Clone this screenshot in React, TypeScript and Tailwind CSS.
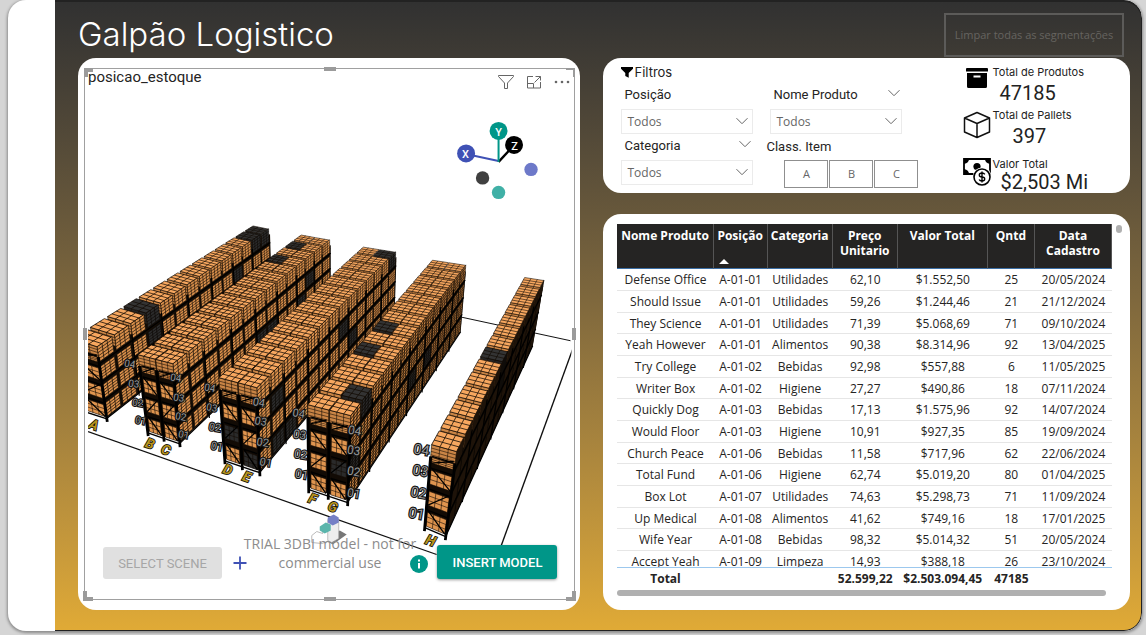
import React from "react";

type Pt = [number, number];

const lerp = (a: Pt, b: Pt, t: number): Pt => [a[0] + (b[0] - a[0]) * t, a[1] + (b[1] - a[1]) * t];
const fmt = (p: Pt) => `${p[0].toFixed(1)} ${p[1].toFixed(1)}`;
const poly = (pts: Pt[]) => `M${pts.map(fmt).join("L")}Z`;
const seg = (a: Pt, b: Pt) => `M${fmt(a)}L${fmt(b)}`;

// Grid lines across the quad a-b-c-d, with n columns along a-b and m rows along a-d.
function mesh(a: Pt, b: Pt, c: Pt, d: Pt, n: number, m: number) {
  let out = "";
  for (let i = 0; i <= n; i++) out += seg(lerp(a, b, i / n), lerp(d, c, i / n));
  for (let j = 0; j <= m; j++) out += seg(lerp(a, d, j / m), lerp(b, c, j / m));
  return out;
}

// Corners: top-left, top-right, bottom-right, bottom-left.
interface RackData {
  near: Pt[];
  far: Pt[];
  bays: number;
  darkTop: string[];
  darkSide: string[];
  darkFront: string[];
  side: string;
  sideLine: number;
}

const racks: RackData[] = [
  {
    near: [[72, 339], [97, 347], [107, 420], [86, 413]],
    far: [[255, 225], [270, 228], [272, 290], [257, 286]],
    bays: 1,
    darkTop: ["3-0", "13-0", "12-0"],
    darkSide: ["3-3", "3-2", "12-3", "13-3", "10-2"],
    darkFront: [],
    side: "#d98f4b",
    sideLine: 0.8,
  },
  {
    near: [[138, 355], [173, 364], [180, 445], [148, 434]],
    far: [[303, 234], [331, 239], [331, 300], [304, 295]],
    bays: 2,
    darkTop: ["12-0", "10-0"],
    darkSide: ["11-2", "10-1", "7-1", "6-1"],
    darkFront: [],
    side: "#d98f4b",
    sideLine: 0.8,
  },
  {
    near: [[219, 378], [257, 388], [260, 474], [225, 462]],
    far: [[365, 246], [397, 251], [395, 314], [365, 309]],
    bays: 2,
    darkTop: ["13-1"],
    darkSide: ["1-2", "1-0", "13-3", "7-2", "8-1", "2-0"],
    darkFront: ["0-1", "1-0"],
    side: "#d98f4b",
    sideLine: 0.8,
  },
  {
    near: [[308, 405], [351, 416], [348, 504], [309, 491]],
    far: [[434, 259], [467, 264], [461, 333], [430, 328]],
    bays: 2,
    darkTop: ["1-1", "4-0", "6-0"],
    darkSide: ["1-3", "6-1", "8-1", "0-1"],
    darkFront: ["1-1"],
    side: "#d08743",
    sideLine: 0.9,
  },
  {
    near: [[432, 445], [457, 452], [446, 538], [425, 529]],
    far: [[526, 276], [545, 279], [533, 347], [515, 343]],
    bays: 1,
    darkTop: ["6-0"],
    darkSide: ["6-3", "6-2"],
    darkFront: [],
    side: "#8f5a2a",
    sideLine: 1.4,
  },
];

const GROUPS = 14;
const LEVELS = 4;

function Rack({ rack }: { rack: RackData }) {
  const { near, far, bays } = rack;
  const depth = (t: number) => (1.45 * t) / (1 + 0.45 * t);
  const at = (u: number, t: number, v: number): Pt => {
    const s = depth(t);
    const n = lerp(lerp(near[3], near[2], u), lerp(near[0], near[1], u), v);
    const f = lerp(lerp(far[3], far[2], u), lerp(far[0], far[1], u), v);
    return lerp(n, f, s);
  };
  const shapes: React.ReactNode[] = [];
  shapes.push(
    <path key="wall" d={poly([at(1, 0, 0.02), at(1, 1, 0.02), at(1, 1, 0.9), at(1, 0, 0.86)])} fill="#140d06" />,
    <path key="deck" d={poly([at(0.05, 0, 0.84), at(1, 0, 0.84), at(1, 1, 0.84), at(0.05, 1, 0.84)])} fill="#140d06" />,
  );
  for (let i = GROUPS - 1; i >= 0; i--) {
    const t0 = i / GROUPS;
    const t1 = (i + 0.8) / GROUPS;
    for (let l = 0; l < LEVELS; l++) {
      const v0 = (l + 0.16) / LEVELS;
      const v1 = l === 3 ? 1 : (l + 0.9) / LEVELS;
      const q: Pt[] = [at(1, t0, v0), at(1, t1 + 0.004, v0), at(1, t1 + 0.004, v1), at(1, t0, v1)];
      const dark = rack.darkSide.includes(`${i}-${l}`);
      shapes.push(
        <path key={`s${i}-${l}`} d={poly(q)} fill={dark ? "#2b2b2b" : rack.side} />,
        <path
          key={`sm${i}-${l}`}
          d={mesh(q[0], q[1], q[2], q[3], 3, 5)}
          stroke="#0b0703"
          strokeWidth={rack.sideLine * (1 - 0.3 * t0)}
          opacity="0.85"
        />,
      );
    }
    for (let b = 0; b < bays; b++) {
      const u0 = b / bays + (b ? 0.01 : 0);
      const u1 = (b + 1) / bays - (b + 1 < bays ? 0.01 : 0);
      const dark = rack.darkTop.includes(`${i}-${b}`);
      const front: Pt[] = [at(u0, t0, 0.84), at(u1, t0, 0.84), at(u1, t0, 1), at(u0, t0, 1)];
      const top: Pt[] = [at(u0, t0, 1), at(u1, t0, 1), at(u1, t1, 1), at(u0, t1, 1)];
      shapes.push(
        <path key={`f${i}-${b}`} d={poly(front)} fill={dark ? "#242424" : "#c98445"} />,
        <path key={`fm${i}-${b}`} d={mesh(front[0], front[1], front[2], front[3], 3, 4)} stroke="#1a0f05" strokeWidth="0.6" />,
        <path key={`t${i}-${b}`} d={poly(top)} fill={dark ? "#333" : "#f7a75f"} />,
        <path
          key={`tm${i}-${b}`}
          d={mesh(top[0], top[1], top[2], top[3], 3, 3)}
          stroke="#120a03"
          strokeWidth={0.8 - 0.25 * t0}
        />,
      );
    }
  }
  // Uprights and beams along the aisle.
  let uprights = "";
  for (let i = 0; i < GROUPS; i += 2) uprights += seg(at(1, i / GROUPS, -0.02), at(1, i / GROUPS, 0.86));
  let beams = "";
  for (let l = 0; l < LEVELS; l++) beams += seg(at(1, 0, (l + 0.06) / LEVELS), at(1, 1, (l + 0.06) / LEVELS));
  shapes.push(<path key="up" d={uprights} stroke="#000" strokeWidth="1.2" />, <path key="bm" d={beams} stroke="#000" strokeWidth="1.2" />);

  // End frame facing the viewer.
  shapes.push(
    <path key="end" d={poly([at(0, 0, 0.04), at(1, 0, 0.04), at(1, 0, 0.86), at(0, 0, 0.86)])} fill="#120b05" />,
  );
  let braces = "";
  for (let b = 0; b < bays; b++) {
    const u0 = b / bays + 0.06;
    const u1 = (b + 1) / bays - 0.06;
    for (let l = 0; l < LEVELS; l++) {
      const v0 = (l + 0.14) / LEVELS;
      const v1 = (l + (l === 3 ? 0.4 : 0.8)) / LEVELS;
      const q: Pt[] = [at(u0, 0, v0), at(u1, 0, v0), at(u1, 0, v1), at(u0, 0, v1)];
      const dark = rack.darkFront.includes(`${b}-${l}`);
      shapes.push(
        <path key={`e${b}-${l}`} d={poly(q)} fill={dark ? "#2a2a2a" : "#e0954f"} />,
        <path key={`em${b}-${l}`} d={mesh(q[0], q[1], q[2], q[3], 3, 3)} stroke="#120a03" strokeWidth="0.6" />,
      );
      braces += l % 2 ? seg(at(u0, 0, v0), at(u1, 0, v1 + 0.03)) : seg(at(u1, 0, v0), at(u0, 0, v1 + 0.03));
      braces += seg(at(u0, 0, (l + 0.9) / LEVELS - (l === 3 ? 0.11 : 0)), at(u1, 0, (l + 0.9) / LEVELS - (l === 3 ? 0.11 : 0)));
    }
  }
  let posts = "";
  for (let b = 0; b <= bays; b++) posts += seg(at(b / bays, 0, -0.03), at(b / bays, 0, 0.86));
  shapes.push(
    <path key="br" d={braces} stroke="#000" strokeWidth="1.3" />,
    <path key="po" d={posts} stroke="#000" strokeWidth="2.8" />,
    <path key="ft" d={seg(at(0, 0, 0.01), at(1, 0, 0.01))} stroke="#000" strokeWidth="1.4" />,
  );
  return <g>{shapes}</g>;
}

const aisleLetters: [string, number, number][] = [
  ["A", 94, 425], ["B", 150, 444], ["C", 166, 450], ["D", 228, 470],
  ["E", 247, 477], ["F", 313, 499], ["G", 333, 507], ["H", 431, 541],
];

const levelMarks: [string, number, number, number][] = [
  ["04", 130, 364, 10], ["03", 134, 384, 10], ["02", 138, 403, 10], ["01", 141, 421, 10],
  ["04", 176, 378, 10], ["03", 179, 398, 10], ["02", 181, 417, 10], ["01", 184, 435, 10],
  ["04", 210, 388, 10], ["03", 212, 408, 10], ["02", 215, 428, 11], ["01", 217, 447, 11],
  ["04", 259, 403, 11], ["03", 261, 422, 11], ["02", 263, 443, 11], ["01", 266, 463, 11],
  ["04", 299, 414, 11], ["03", 300, 435, 12], ["02", 301, 455, 12], ["01", 302, 475, 12],
  ["04", 355, 431, 12], ["03", 354, 451, 12], ["02", 354, 472, 12], ["01", 354, 494, 12],
  ["04", 422, 450, 14], ["03", 421, 471, 14], ["02", 419, 493, 14], ["01", 417, 514, 14],
];

function Scene() {
  return (
    <svg viewBox="85 95 490 505" className="block w-full" fill="none" role="img" aria-label="Modelo 3D do estoque">
      <defs>
        <clipPath id="stage">
          <rect x="88" y="95" width="484" height="505" />
        </clipPath>
      </defs>
      <g clipPath="url(#stage)">
        <path d="M460 317L571 341" stroke="#111" strokeWidth="1" />
        <path d="M573 350L501 548" stroke="#111" strokeWidth="1.4" />
        <path d="M88 432L437 555" stroke="#111" strokeWidth="1.3" />
        {racks.map((r, i) => (
          <Rack key={i} rack={r} />
        ))}
        <g fontFamily='"Roboto", sans-serif' textAnchor="middle" stroke="#111" paintOrder="stroke">
          {levelMarks.map(([t, x, y, s], i) => (
            <text key={i} x={x} y={y} fontSize={s} fill="#999" strokeWidth="2.2" dominantBaseline="central" transform={`rotate(10 ${x} ${y})`}>
              {t}
            </text>
          ))}
          {aisleLetters.map(([t, x, y]) => (
            <text
              key={t} x={x} y={y} fontSize="14" fontWeight="700" fontStyle="italic" fill="#b8931a" strokeWidth="1.6"
              dominantBaseline="central" transform={`rotate(20 ${x} ${y})`}
            >
              {t}
            </text>
          ))}
        </g>
      </g>
      <path d="M499 161L471 155" stroke="#3f51b5" strokeWidth="2" />
      <path d="M499 162L511 149" stroke="#000" strokeWidth="2.4" />
      <path d="M499 162V135" stroke="#009688" strokeWidth="2" />
      <circle cx="499" cy="131" r="9" fill="#009688" />
      <circle cx="466.500" cy="153.500" r="9" fill="#3f51b5" />
      <circle cx="514.500" cy="145" r="9" fill="#000" />
      <circle cx="531.500" cy="169.500" r="6.700" fill="#6d79c9" />
      <circle cx="483" cy="178" r="6.700" fill="#404040" />
      <circle cx="499" cy="192.500" r="6.700" fill="#40b0a6" />
      <g fontFamily='"Roboto", sans-serif' fontSize="11" fontWeight="500" fill="#fff" textAnchor="middle">
        <text x="499" y="136">Y</text>
        <text x="466" y="158">X</text>
        <text x="515" y="150">Z</text>
      </g>
      <g>
        <path d="M325 540L340 531L347 535L333 545Z" fill="#777" />
        <path d="M312 536L317 532L323 534V529L331 527V541L322 544L312 543Z" fill="#fff" stroke="#aaa" strokeWidth="0.8" />
        <path d="M328 520L334 523L339 520V539L332 543L328 541Z" fill="#eee" stroke="#999" strokeWidth="0.6" />
        <path d="M328 518L334 515L339 518V523L333 526L328 523Z" fill="#7580c6" />
        <path d="M320 527L326 523L331 525V531L325 534L320 531Z" fill="#5bb5ac" />
      </g>
    </svg>
  );
}

function Chevron({ className = "" }: { className?: string }) {
  return (
    <svg viewBox="0 0 12 8" className={`h-2 w-3 ${className}`} fill="none" stroke="#666" strokeWidth="1">
      <path d="M0.500 1.200L6 6.700L11.500 1.200" />
    </svg>
  );
}

function Slicer({ id, label, chevron, children }: { id: string; label: string; chevron?: boolean; children?: React.ReactNode }) {
  return (
    <div className="w-[132px]">
      <div className="flex h-6 items-center justify-between pl-[3px] pr-[2px]">
        <label htmlFor={id} className="font-['Roboto',sans-serif] text-[13px] text-[#252423]">{label}</label>
        {chevron && <Chevron className="mb-1" />}
      </div>
      <div className="relative mt-[2px]">
        <select
          id={id}
          className="block h-[25px] w-full appearance-none border border-[#ebebeb] bg-white pl-[5px] font-['Open_Sans',sans-serif] text-[12px] text-[#666]"
        >
          <option>Todos</option>
          {children}
        </select>
        <Chevron className="pointer-events-none absolute right-[5px] top-2" />
      </div>
    </div>
  );
}

function Stat({ icon, label, value, className }: { icon: React.ReactNode; label: string; value: string; className: string }) {
  return (
    <div className="flex items-start gap-[2px]">
      <span className="flex w-7 shrink-0 justify-center">{icon}</span>
      <div>
        <div className="whitespace-nowrap font-['Inter',sans-serif] text-[11px] leading-4 text-[#222]">{label}</div>
        <div className={`font-['Roboto',sans-serif] text-[20px] leading-[27px] text-[#222] ${className}`}>{value}</div>
      </div>
    </div>
  );
}

const columns: [string, string][] = [
  ["Nome Produto", "w-[96px]"], ["Posição", "w-[54px]"], ["Categoria", "w-[65px]"], ["Preço Unitario", "w-[65px]"],
  ["Valor Total", "w-[90px]"], ["Qntd", "w-[47px]"], ["Data Cadastro", "w-[77px]"],
];

const rows = [
  ["Defense Office", "A-01-01", "Utilidades", "62,10", "$1.552,50", "25", "20/05/2024"],
  ["Should Issue", "A-01-01", "Utilidades", "59,26", "$1.244,46", "21", "21/12/2024"],
  ["They Science", "A-01-01", "Utilidades", "71,39", "$5.068,69", "71", "09/10/2024"],
  ["Yeah However", "A-01-01", "Alimentos", "90,38", "$8.314,96", "92", "13/04/2025"],
  ["Try College", "A-01-02", "Bebidas", "92,98", "$557,88", "6", "11/05/2025"],
  ["Writer Box", "A-01-02", "Higiene", "27,27", "$490,86", "18", "07/11/2024"],
  ["Quickly Dog", "A-01-03", "Bebidas", "17,13", "$1.575,96", "92", "14/07/2024"],
  ["Would Floor", "A-01-03", "Higiene", "10,91", "$927,35", "85", "19/09/2024"],
  ["Church Peace", "A-01-06", "Bebidas", "11,58", "$717,96", "62", "22/06/2024"],
  ["Total Fund", "A-01-06", "Higiene", "62,74", "$5.019,20", "80", "01/04/2025"],
  ["Box Lot", "A-01-07", "Utilidades", "74,63", "$5.298,73", "71", "11/09/2024"],
  ["Up Medical", "A-01-08", "Alimentos", "41,62", "$749,16", "18", "17/01/2025"],
  ["Wife Year", "A-01-08", "Bebidas", "98,32", "$5.014,32", "51", "20/05/2024"],
  ["Accept Yeah", "A-01-09", "Limpeza", "14,93", "$388,18", "26", "23/10/2024"],
];
const totals = ["Total", "", "", "52.599,22", "$2.503.094,45", "47185", ""];

function ProductTable() {
  return (
    <section className="rounded-[18px] bg-white pb-[14px] pl-[14px] pr-2 pt-[10px]">
      <div className="flex gap-1">
        <div className="h-[366px] flex-1 overflow-hidden">
          <table className="w-full table-fixed border-separate border-spacing-0 text-center font-['Open_Sans',sans-serif] text-[12px] leading-[15px] text-[#252423]">
            <thead>
              <tr className="h-[45px] bg-[#252423] align-top font-bold text-white">
                {columns.map(([name, width], i) => (
                  <th key={name} scope="col" className={`relative border-b border-r border-b-[#3b6ea5] border-r-[#555] pt-1 ${width}`}>
                    {name}
                    {i === 1 && <span className="absolute bottom-1 left-[5px] h-0 w-0 border-x-[5px] border-b-[5px] border-x-transparent border-b-white" />}
                  </th>
                ))}
              </tr>
            </thead>
            <tbody>
              {rows.map((row, r) => (
                <tr key={r} className="h-[22px] nth-[3n]:h-[21px]">
                  {row.map((cell, c) => (
                    <td key={c} className="whitespace-nowrap border-b border-[#e6e6e6]">{cell}</td>
                  ))}
                </tr>
              ))}
            </tbody>
            <tfoot className="sticky bottom-0 bg-white font-bold">
              <tr className="h-[23px] align-top">
                {totals.map((cell, c) => (
                  <td key={c} className="whitespace-nowrap border-t border-[#9cc8ee] pt-[3px]">{cell}</td>
                ))}
              </tr>
            </tfoot>
          </table>
        </div>
        <span className="mt-[1px] h-2 w-[6px] rounded-full bg-[#b0b0b0]" />
      </div>
      <div className="mr-4 h-[6px] rounded-full bg-[#b0b0b0]" />
    </section>
  );
}

function Filters() {
  return (
    <section className="flex h-[135px] justify-between rounded-[18px] bg-white pl-[18px] pr-[42px]">
      <div>
        <h2 className="flex h-[25px] items-end pb-px font-['Inter',sans-serif] text-[13px] leading-5 text-[#222]">
          <svg viewBox="0 0 14 13" className="mb-[3px] mr-px h-[13px] w-3" fill="#000">
            <path d="M0 0H14V2L9 7V12.500L5 10.500V7L0 2Z" />
          </svg>
          Filtros
        </h2>
        <div className="grid grid-cols-[132px_152px] gap-x-[17px]">
          <Slicer id="posicao" label="Posição"><option>A-01-01</option></Slicer>
          <Slicer id="produto" label="Nome Produto" chevron><option>Defense Office</option></Slicer>
          <Slicer id="categoria" label="Categoria" chevron><option>Utilidades</option></Slicer>
          <fieldset className="-ml-1">
            <legend className="flex h-[26px] items-center font-['Roboto',sans-serif] text-[13px] text-[#252423]">Class. Item</legend>
            <div className="flex gap-[1px] pl-[18px]">
              {["A", "B", "C"].map((c) => (
                <button key={c} type="button" className="h-7 w-11 border border-[#8f8f8f] bg-white font-['Open_Sans',sans-serif] text-[11px] text-[#666]">
                  {c}
                </button>
              ))}
            </div>
          </fieldset>
        </div>
      </div>
      <div className="flex flex-col pt-[6px]">
        <Stat
          label="Total de Produtos" value="47185" className="pl-[7px]"
          icon={
            <svg viewBox="0 0 22 20" className="mt-1 h-5 w-[22px]" fill="#000">
              <path d="M1 0H21Q22 0 22 1V3.500H0V1Q0 0 1 0ZM1 5H21V18.500Q21 20 19.500 20H2.500Q1 20 1 18.500ZM7.500 7.500V9.500H14.500V7.500Z" fillRule="evenodd" />
            </svg>
          }
        />
        <Stat
          label="Total de Pallets" value="397" className="pl-5"
          icon={
            <svg viewBox="0 0 28 28" className="mt-1 h-7 w-7" fill="none" stroke="#111" strokeWidth="1.5" strokeLinejoin="round">
              <path d="M14 1.500L26.500 7V21L14 26.500L1.500 21V7ZM1.500 7L14 12.500L26.500 7M14 12.500V26.500" />
            </svg>
          }
        />
        <div className="mt-[6px]">
          <Stat
            label="Valor Total" value="$2,503 Mi" className="-mt-[3px] whitespace-nowrap pl-2"
            icon={
              <svg viewBox="0 0 28 28" className="mt-[2px] h-7 w-7" fill="none" stroke="#000">
                <path d="M1 1H27V16H1Z" strokeWidth="1.800" />
                <path d="M1 1H6Q6 5 1 6ZM27 1H22Q22 5 27 6ZM1 16H6Q6 12 1 11Z" fill="#000" stroke="none" />
                <circle cx="14" cy="8.500" r="3.600" fill="#000" stroke="none" />
                <circle cx="19" cy="19" r="9.500" fill="#fff" stroke="none" />
                <circle cx="19" cy="19" r="8" strokeWidth="1.600" />
                <path d="M21.800 16.300Q21 15 19 15Q16.300 15 16.300 17T19 19T21.700 21T19 23Q16.800 23 16.200 21.500M19 13.500V24.500" strokeWidth="1.400" />
              </svg>
            }
          />
        </div>
      </div>
    </section>
  );
}

function Handles() {
  const bar = "absolute bg-[#9b9b9b]";
  return (
    <div className="pointer-events-none" aria-hidden="true">
      <span className="absolute -left-px -top-px h-[9px] w-[9px] border-l-4 border-t-4 border-[#9b9b9b]" />
      <span className="absolute -right-px -top-px h-[9px] w-[9px] border-r-2 border-t-2 border-[#9b9b9b]" />
      <span className="absolute -bottom-[2px] -left-[2px] h-[10px] w-[10px] border-b-4 border-l-4 border-[#9b9b9b]" />
      <span className="absolute -bottom-[2px] -right-[2px] h-[10px] w-[10px] border-b-4 border-r-4 border-[#9b9b9b]" />
      <span className={`${bar} -top-[2px] left-1/2 h-1 w-3 -translate-x-1/2`} />
      <span className={`${bar} -bottom-[2px] left-1/2 h-1 w-3 -translate-x-1/2`} />
      <span className={`${bar} -left-[2px] top-1/2 h-3 w-1 -translate-y-1/2`} />
      <span className={`${bar} -right-[2px] top-1/2 h-3 w-1 -translate-y-1/2`} />
    </div>
  );
}

function ModelPanel() {
  return (
    <section className="rounded-[18px] bg-white pb-[10px] pl-[6px] pr-[5px] pt-[10px]">
      <div className="relative border border-[#a0a0a0]">
        <header className="flex h-[26px] items-center justify-between pl-[3px] pr-1">
          <h2 className="pb-[9px] font-['Roboto',sans-serif] text-[15px] text-[#252423]">posicao_estoque</h2>
          <div className="flex items-center gap-3">
            <button type="button" aria-label="Filtros do visual">
              <svg viewBox="0 0 16 16" className="h-4 w-4" fill="none" stroke="#666">
                <path d="M0.500 1.500H15.500V2.500L9.500 9V14.500H6.500V9L0.500 2.500Z" />
              </svg>
            </button>
            <button type="button" aria-label="Modo de foco">
              <svg viewBox="0 0 16 14" className="h-[14px] w-4" fill="none" stroke="#666">
                <path d="M7 1.500H1.500V13H14.500V7M9.500 1.500H14.500V5.500M14.500 1.500L8.500 7.500M1.500 8.500H7.500V13" />
              </svg>
            </button>
            <button type="button" aria-label="Mais opções">
              <svg viewBox="0 0 16 4" className="h-1 w-4" fill="#666">
                <circle cx="2" cy="2" r="1.300" /><circle cx="8" cy="2" r="1.300" /><circle cx="14" cy="2" r="1.300" />
              </svg>
            </button>
          </div>
        </header>
        <Scene />
        <div className="absolute bottom-5 left-[18px] right-[17px] flex items-end font-['Roboto',sans-serif] text-[13px]">
          <button type="button" disabled className="h-8 w-[119px] shrink-0 rounded-[3px] bg-[#e0e0e0] text-[#a6a6a6]">SELECT SCENE</button>
          <button type="button" aria-label="Adicionar cena" className="mb-[9px] ml-[11px] shrink-0">
            <svg viewBox="0 0 14 14" className="h-[14px] w-[14px]" stroke="#3f51b5" strokeWidth="1.800"><path d="M7 0.500V13.500M0.500 7H13.500" /></svg>
          </button>
          <p className="-ml-[6px] mb-[7px] w-[178px] shrink-0 text-center font-['Open_Sans',sans-serif] text-[14px] leading-[19px] text-[#8c8c8c]">
            TRIAL 3DBI model - not for commercial use
          </p>
          <button type="button" aria-label="Informações" className="-ml-[9px] mb-[6px] shrink-0">
            <svg viewBox="0 0 18 18" className="h-[18px] w-[18px]"><circle cx="9" cy="9" r="9" fill="#009688" /><path d="M8 4.500H10V6.500H8ZM8 8H10V13.500H8Z" fill="#fff" /></svg>
          </button>
          <button type="button" className="ml-auto h-[34px] w-[120px] shrink-0 rounded-[3px] bg-[#009688] font-medium text-white shadow-[0_1px_3px_rgba(0,0,0,0.4)]">INSERT MODEL</button>
        </div>
        <Handles />
      </div>
    </section>
  );
}

export default function App() {
  return (
    <div className="flex min-h-screen bg-[#d5d5d5] pb-1 pl-2 pr-1">
      <div className="flex flex-1 overflow-hidden rounded-[18px] bg-white shadow-[0_1px_3px_1px_rgba(0,0,0,0.35)]">
        <aside className="w-[47px] shrink-0" />
        <main className="flex-1 rounded-r-[18px] border-b border-r border-t-2 border-[#222] bg-linear-to-b from-[#313131] to-[#e0aa36] pb-5 pl-[23px] pr-[11px]">
          <header className="flex h-14 items-end justify-between pr-[6px]">
            <h1 className="pb-1 font-['Inter',sans-serif] text-[33px] font-light leading-10 text-white">Galpão Logistico</h1>
            <button type="button" className="mb-px h-11 w-[180px] whitespace-nowrap border-2 border-[#5c5b59] font-['Open_Sans',sans-serif] text-[11px] text-[#666460]">
              Limpar todas as segmentações
            </button>
          </header>
          <div className="grid grid-cols-[502fr_526fr] items-start gap-[23px]">
            <ModelPanel />
            <div className="flex flex-col gap-[21px]">
              <Filters />
              <ProductTable />
            </div>
          </div>
        </main>
      </div>
    </div>
  );
}
